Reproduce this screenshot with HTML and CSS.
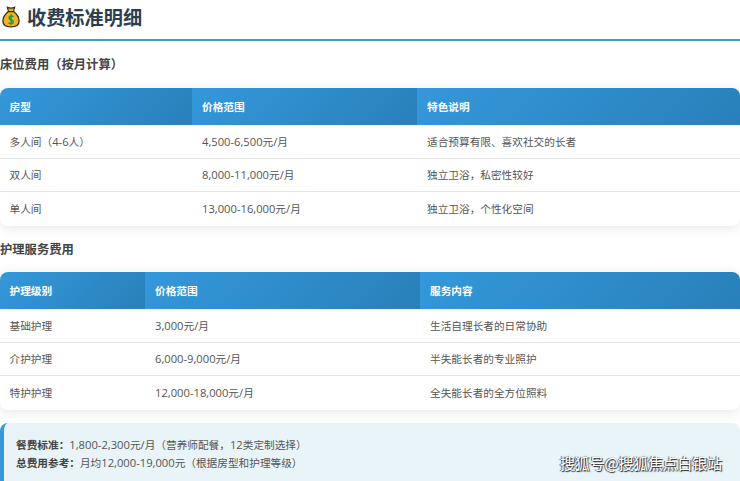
FILE: index.html
```html
<!DOCTYPE html>
<html lang="zh">
<head>
<meta charset="utf-8">
<title>收费标准明细</title>
<link rel="stylesheet" href="styles.css">
</head>
<body>
<div class="page">
  <h2 class="title">
    <svg class="bag" viewBox="0 0 20 24" width="18" height="22">
      <path d="M6 1.2 C8 2.4 12 2.4 14 1.2 L12.8 6 H7.2 Z" fill="#f7b21d" stroke="#2a2a1e" stroke-width="1.3"/>
      <path d="M7.2 6 C3.2 9 1 12 1 16.5 C1 21.5 5 23 10 23 C15 23 19 21.5 19 16.5 C19 12 16.8 9 12.8 6 Z" fill="#f7b21d" stroke="#2a2a1e" stroke-width="1.4"/>
      <path d="M12.8 11.6 C11.6 10.4 7.8 10.4 7.8 13 C7.8 15.6 12.6 14.6 12.6 17.4 C12.6 19.8 8.6 19.8 7.2 18.4 M10.1 9 V21" fill="none" stroke="#1e9b3c" stroke-width="1.6"/>
    </svg>
    <span>收费标准明细</span>
  </h2>

  <h3 class="sub">床位费用（按月计算）</h3>
  <table class="fee t1">
    <thead><tr><th>房型</th><th>价格范围</th><th>特色说明</th></tr></thead>
    <tbody>
      <tr><td>多人间（<span class="n">4-6</span>人）</td><td><span class="n">4,500-6,500</span>元<span class="n">/</span>月</td><td>适合预算有限、喜欢社交的长者</td></tr>
      <tr><td>双人间</td><td><span class="n">8,000-11,000</span>元<span class="n">/</span>月</td><td>独立卫浴，私密性较好</td></tr>
      <tr><td>单人间</td><td><span class="n">13,000-16,000</span>元<span class="n">/</span>月</td><td>独立卫浴，个性化空间</td></tr>
    </tbody>
  </table>

  <h3 class="sub second">护理服务费用</h3>
  <table class="fee t2">
    <thead><tr><th>护理级别</th><th>价格范围</th><th>服务内容</th></tr></thead>
    <tbody>
      <tr><td>基础护理</td><td><span class="n">3,000</span>元<span class="n">/</span>月</td><td>生活自理长者的日常协助</td></tr>
      <tr><td>介护护理</td><td><span class="n">6,000-9,000</span>元<span class="n">/</span>月</td><td>半失能长者的专业照护</td></tr>
      <tr><td>特护护理</td><td><span class="n">12,000-18,000</span>元<span class="n">/</span>月</td><td>全失能长者的全方位照料</td></tr>
    </tbody>
  </table>

  <div class="note">
    <p><strong>餐费标准：</strong><span class="n">1,800-2,300</span>元<span class="n">/</span>月（营养师配餐，<span class="n">12</span>类定制选择）</p>
    <p><strong>总费用参考：</strong>月均<span class="n">12,000-19,000</span>元（根据房型和护理等级）</p>
  </div>
</div>
<div class="mark">搜狐号@搜狐焦点白银站</div>
</body>
</html>
```
FILE: styles.css
```css
html, body { margin: 0; padding: 0; }
body {
  width: 740px; height: 481px; overflow: hidden; position: relative;
  background: #fff; color: #444;
  font-family: "Open Sans", "Noto Sans CJK SC", sans-serif;
  font-size: 10.67px;
}
.n { font-size: 11.2px; }
.title {
  margin: 0; display: flex; align-items: center; gap: 7px;
  padding-left: 2px; box-sizing: border-box;
  border-bottom: 2px solid #3f9bdc; height: 41px; padding-bottom: 5px;
  font-size: 19.2px; font-weight: 700; color: #2c3e50;
}
.bag { flex: none; }
.sub {
  margin: 15px 0 14px; font-size: 12.3px; line-height: 18px; font-weight: 700; color: #444;
}
.sub.second { margin: 15px 0 13.5px; }
.fee {
  width: 740px; table-layout: fixed; border-collapse: separate; border-spacing: 0;
  border-radius: 8px; overflow: hidden; background: #fff;
  box-shadow: 0 2px 12px rgba(0,0,0,.1);
}
.fee th {
  height: 37px; padding: 0 10px; box-sizing: border-box; text-align: left;
  font-size: 10.67px; font-weight: 700; color: #fff;
  background: linear-gradient(135deg, #3498db, #2980b9);
}
.fee td {
  height: 33.5px; padding: 0 10px; box-sizing: border-box;
  border-bottom: 1px solid #e6e6e6; color: #555;
}
.fee th:first-child, .fee td:first-child { padding-left: 9.5px; }
.fee tbody tr:last-child td { border-bottom: 0; }
.t1 th:nth-child(1) { width: 192px; }
.t1 th:nth-child(2) { width: 225px; }
.t2 th:nth-child(1) { width: 145px; }
.t2 th:nth-child(2) { width: 275px; }
.note {
  margin-top: 13.5px; height: 70px; box-sizing: border-box;
  padding: 13px 12px; background: #e8f4f8;
  border-left: 4px solid #3498db; border-radius: 8px;
  line-height: 17px; color: #555;
}
.note p { margin: 0; }
.note strong { color: #444; }
.mark {
  position: absolute; left: 560px; top: 453px;
  font-size: 14.8px; line-height: 20px; color: #fff;
  font-family: "Noto Sans CJK SC", sans-serif;
  text-shadow: 1px 1px 1px #222, -1px 0 1px #444;
  white-space: nowrap;
}
```
